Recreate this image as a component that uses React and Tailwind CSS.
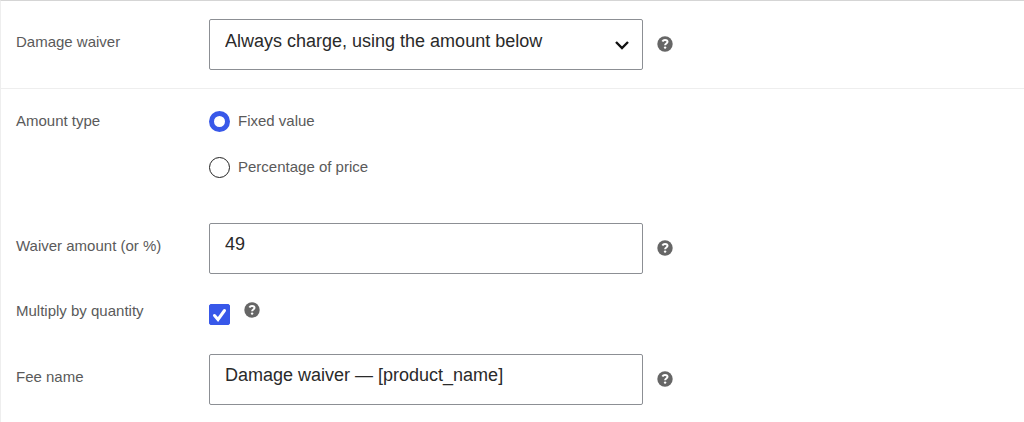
import { useState } from "react";

const labelClass = "w-[193px] shrink-0 pb-1.5 text-[15px] leading-6 text-[#5a5a5a]";
const fieldClass =
  "h-[51px] w-[434px] rounded-xs border border-[#8c8f94] bg-white px-[15px] pb-2 text-lg text-[#2a2a2a] outline-none";

function HelpTip({ label }) {
  return (
    <button type="button" aria-label={label} className="size-4 shrink-0">
      <svg viewBox="0 0 16 16" className="size-4">
        <circle cx="8" cy="8" r="7.7" fill="#666" />
        <path
          d="M5.4 5.4C6 4.3 6.9 3.9 8 3.9c1.5 0 2.5.7 2.5 1.9 0 1.7-2.4 1.7-2.4 3.4"
          fill="none"
          stroke="#fff"
          strokeWidth="2"
        />
        <circle cx="8.1" cy="11.6" r="1.2" fill="#fff" />
      </svg>
    </button>
  );
}

function AmountType({ value, checked, onChange, children }) {
  return (
    <label className="flex items-center gap-2 text-[15px] leading-6 text-[#5a5a5a]">
      <input
        type="radio"
        name="amount_type"
        value={value}
        checked={checked}
        onChange={() => onChange(value)}
        className="size-[21px] appearance-none rounded-full border border-[#222] bg-white checked:border-5 checked:border-[#3858e9]"
      />
      {children}
    </label>
  );
}

export default function App() {
  const [type, setType] = useState("fixed");

  return (
    <form className="border-t border-l border-t-[#d5d5d5] border-l-[#eee] bg-white font-['Liberation_Sans',Arial,sans-serif]">
      <div className="flex items-center border-b border-[#eee] py-[18px] pl-[15px]">
        <label htmlFor="waiver" className={labelClass}>
          Damage waiver
        </label>
        <div className="relative mr-3.5">
          <select id="waiver" className={`${fieldClass} appearance-none`}>
            <option>Always charge, using the amount below</option>
            <option>Never charge</option>
          </select>
          <svg
            viewBox="0 0 16 10"
            className="pointer-events-none absolute top-[21px] right-[13px] h-2.5 w-4"
          >
            <path d="M2 2l6 6 6-6" fill="none" stroke="#111" strokeWidth="2.4" />
          </svg>
        </div>
        <div className="flex pb-0.5">
          <HelpTip label="Damage waiver help" />
        </div>
      </div>

      <div role="radiogroup" aria-labelledby="amount-type" className="flex pt-5 pl-[15px]">
        <span id="amount-type" className={labelClass}>
          Amount type
        </span>
        <div className="flex flex-col gap-[22px]">
          <AmountType value="fixed" checked={type === "fixed"} onChange={setType}>
            Fixed value
          </AmountType>
          <AmountType value="percent" checked={type === "percent"} onChange={setType}>
            Percentage of price
          </AmountType>
        </div>
      </div>

      <div className="flex items-center pt-11 pl-[15px]">
        <label htmlFor="amount" className={labelClass}>
          Waiver amount (or %)
        </label>
        <input id="amount" defaultValue="49" className={`${fieldClass} mr-3.5`} />
        <div className="flex pb-0.5">
          <HelpTip label="Waiver amount help" />
        </div>
      </div>

      <div className="flex items-center pt-[25px] pl-[15px]">
        <label htmlFor="multiply" className={labelClass}>
          Multiply by quantity
        </label>
        <span className="mr-3.5 grid">
          <input
            id="multiply"
            type="checkbox"
            defaultChecked
            className="peer col-start-1 row-start-1 size-[21px] appearance-none rounded-xs border border-[#8c8f94] checked:border-[#3858e9] checked:bg-[#3858e9]"
          />
          <svg
            viewBox="0 0 21 21"
            className="pointer-events-none invisible col-start-1 row-start-1 size-[21px] peer-checked:visible"
          >
            <path
              d="M5.5 11.5l3.5 4 6.5-9"
              fill="none"
              stroke="#fff"
              strokeWidth="3"
              strokeLinecap="round"
            />
          </svg>
        </span>
        <div className="flex pb-2">
          <HelpTip label="Multiply by quantity help" />
        </div>
      </div>

      <div className="flex items-center pt-[25px] pb-[17px] pl-[15px]">
        <label htmlFor="fee" className={labelClass}>
          Fee name
        </label>
        <input
          id="fee"
          defaultValue="Damage waiver — [product_name]"
          className={`${fieldClass} mr-3.5`}
        />
        <div className="flex pb-0.5">
          <HelpTip label="Fee name help" />
        </div>
      </div>
    </form>
  );
}
